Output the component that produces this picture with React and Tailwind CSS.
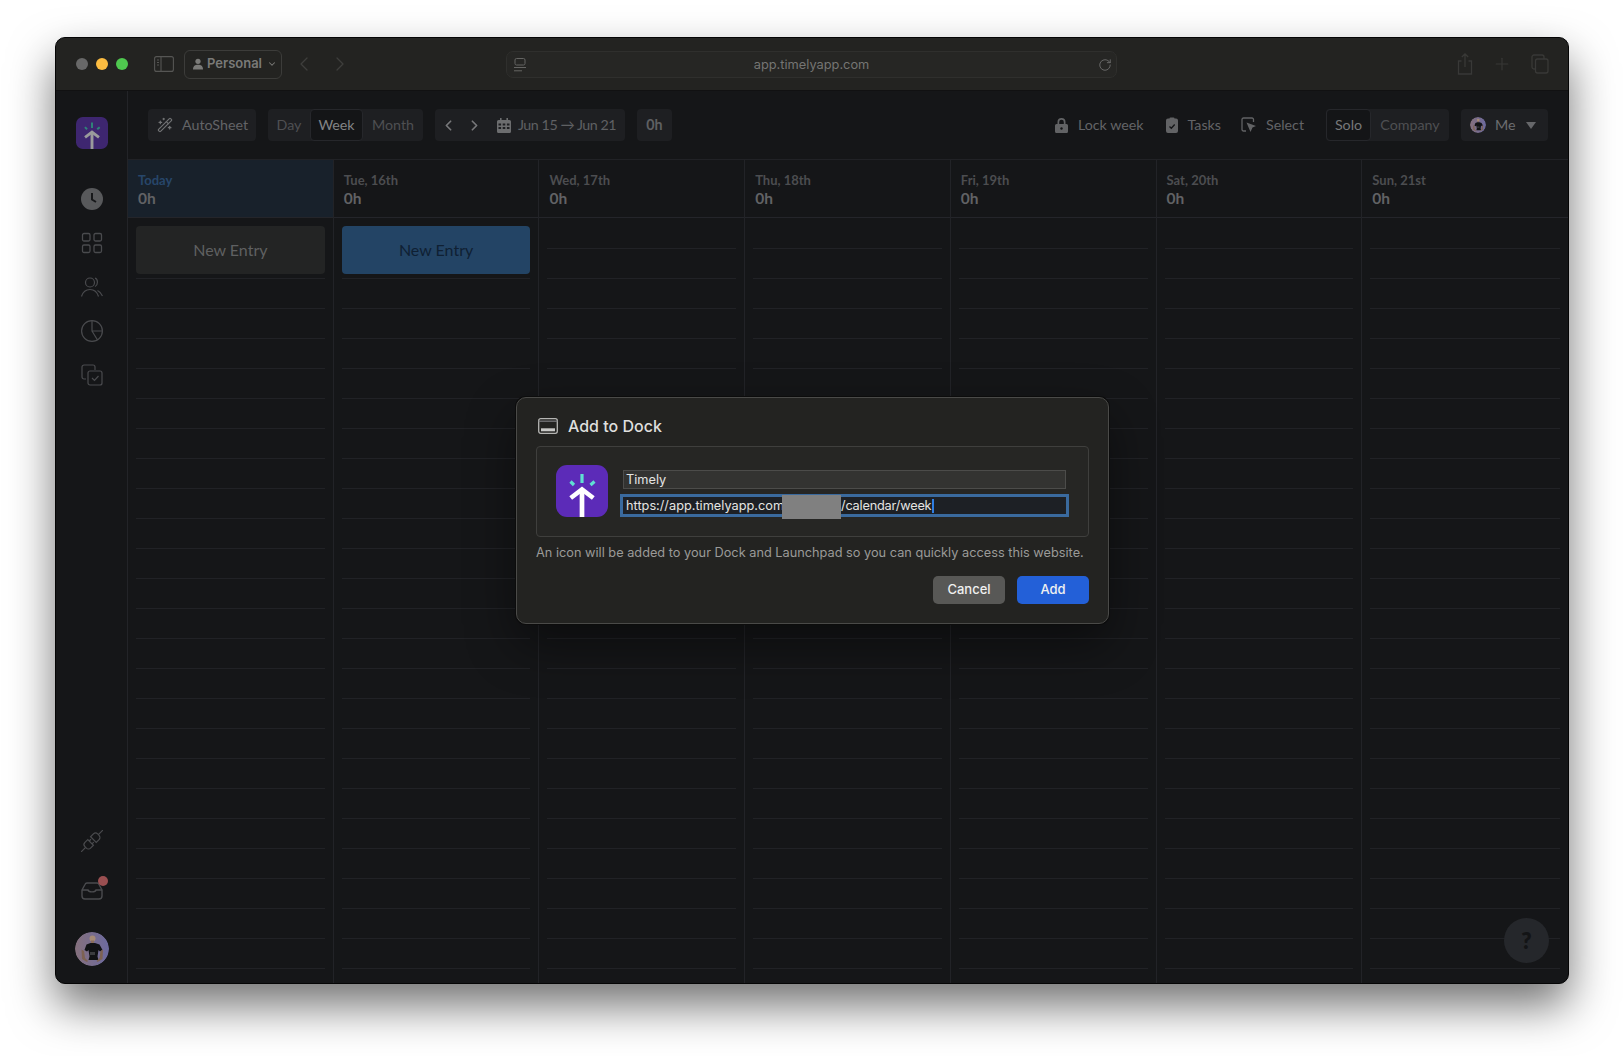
import { ChevronLeft, ChevronRight, ChevronDown, Plus, RotateCw, WandSparkles } from "lucide-react";

const days = ["Today", "Tue, 16th", "Wed, 17th", "Thu, 18th", "Fri, 19th", "Sat, 20th", "Sun, 21st"];
const rows = Array.from({ length: 25 }, (_, i) => i);

function TimelyMark({ bg, arrow, ray, className }) {
  return (
    <svg viewBox="0 0 52 52" className={className}>
      <rect width="52" height="52" rx="11" fill={bg} />
      <path d="M26 25V52" stroke={arrow} strokeWidth="4.7" />
      <path d="M14.7 33L26 24.5L37.3 33" stroke={arrow} strokeWidth="4.6" fill="none" />
      <path d="M26 9V18M14.5 16.5L18 20M38.5 16.5L34.5 20" stroke={ray} strokeWidth="3.2" fill="none" />
    </svg>
  );
}

function Avatar({ className, id }) {
  return (
    <svg viewBox="0 0 34 34" className={className}>
      <defs>
        <linearGradient id={id} x1="0" x2="1" y1="0" y2="0">
          <stop offset="0" stopColor="#85707c" />
          <stop offset="1" stopColor="#6c6a9f" />
        </linearGradient>
      </defs>
      <circle cx="17" cy="17" r="17" fill={`url(#${id})`} />
      <circle cx="17.5" cy="6.5" r="3" fill="#a58a76" />
      <path d="M16 8.5h3v3h-3z" fill="#8a6e5c" />
      <path d="M11.5 12.5l4-1.5h4.5l4.5 1.5 3 5.5-2.5 1.5-1.5-1.5-1 6.5 1 3.5h-10l1-3.5-1-6.5-1.5 1.5-2.5-1.5z" fill="#111214" />
      <path d="M6.5 17.5l2.5 1.5 1 7 3 3-1 1-5-3zM28 17.500l-2.5 1.5-1 7-3 3 1 1 5-3z" fill="#7d6252" />
      <path d="M15 20h5v3h-5z" fill="#3b3c3e" />
    </svg>
  );
}

function ToolAction({ icon, label, className }) {
  return (
    <div className={`flex items-center gap-[10px] ${className || ""}`}>
      {icon}
      <span>{label}</span>
    </div>
  );
}

function DayColumn({ day, index }) {
  const isToday = index === 0;
  return (
    <div className="relative border-r border-[#222327] last:border-r-0">
      <div className={`h-[58px] border-b border-[#24252a] pl-[10px] pt-[11px] ${isToday ? "bg-[#18212b]" : ""}`}>
        <div className={`text-[13px] leading-[18px] font-bold ${isToday ? "text-[#27466a]" : "text-[#4c4d50]"}`}>{day}</div>
        <div className="-mt-[1px] text-[15.5px] leading-[20px] font-bold text-[#616265]">0h</div>
      </div>
      <div className="px-2 pt-[1px]">
        {rows.map((r) => (
          <div key={r} className="h-[30px] border-b border-[#212226]"></div>
        ))}
      </div>
      {index < 2 && (
        <div
          className={`absolute left-2 right-2 top-[66px] flex h-[48px] items-center justify-center rounded-[4px] text-[16px] ${
            isToday ? "bg-[#232424] text-[#5f6061]" : "bg-[#234465] text-[#0f2033]"
          }`}
        >
          New Entry
        </div>
      )}
    </div>
  );
}

function Sidebar() {
  return (
    <div className="relative flex w-[72px] shrink-0 flex-col items-center border-r border-[#232428] pt-[26px] pb-[17px]">
      <TimelyMark bg="#3e2670" arrow="#9a9a9c" ray="#2f8278" className="h-8 w-8 rounded-[5px]" />
      <svg viewBox="0 0 22 22" className="mt-[39px] h-[22px] w-[22px]">
        <circle cx="11" cy="11" r="11" fill="#58595b" />
        <path d="M11 5v6.5l4 2.5" stroke="#17181a" strokeWidth="2" fill="none" />
      </svg>
      <svg viewBox="0 0 22 22" className="mt-[22px] h-[22px] w-[22px]" fill="none" stroke="#4a4b4e" strokeWidth="1.3">
        <rect x="1.5" y="1.5" width="7.5" height="7.5" rx="1.5" />
        <rect x="13" y="1.5" width="7.5" height="7.5" rx="1.5" />
        <rect x="1.5" y="13" width="7.5" height="7.5" rx="1.5" />
        <rect x="13" y="13" width="7.5" height="7.5" rx="1.5" />
      </svg>
      <svg viewBox="0 0 22 22" className="mt-[22px] h-[22px] w-[22px]" fill="none" stroke="#4a4b4e" strokeWidth="1.2">
        <circle cx="9" cy="6.5" r="4.5" />
        <path d="M0.5 20.5C2 15.5 5 13.5 9 13.5S16 15.5 17.5 20.5" />
        <path d="M14 2.2C17 3 17.5 8.5 14 10.5M16.5 14.5C18.8 15.5 20.3 17.5 21.5 20" />
      </svg>
      <svg viewBox="0 0 22 22" className="mt-[22px] h-[22px] w-[22px]" fill="none" stroke="#4a4b4e" strokeWidth="1.2">
        <circle cx="11" cy="11" r="10.4" />
        <path d="M11 .6V11H21.4M11 11L16.5 20" />
      </svg>
      <svg viewBox="0 0 22 22" className="mt-[22px] h-[22px] w-[22px]" fill="none" stroke="#4a4b4e" strokeWidth="1.2">
        <path d="M5 15H3a2 2 0 0 1-2-2V3a2 2 0 0 1 2-2h9a2 2 0 0 1 2 2v3" />
        <rect x="7" y="7" width="14" height="14" rx="2" />
        <path d="M11 14l2.5 2.5L17.5 12" />
      </svg>

      <div className="mt-auto flex flex-col items-center">
        <svg viewBox="-11 -11 22 22" className="h-[22px] w-[22px]" fill="none" stroke="#4a4b4e" strokeWidth="1.2">
          <g transform="rotate(-45)">
            <path d="M-15.5 0H-9M9 0H15.5" />
            <path d="M-2 -4H-6A3 3 0 0 0 -9 -1V1A3 3 0 0 0 -6 4H-2Z" />
            <path d="M2 -4H6A3 3 0 0 1 9 -1V1A3 3 0 0 1 6 4H2Z" />
            <path d="M-2 -2H.5M-2 2H.5" />
          </g>
        </svg>
        <div className="relative mt-[30px]">
          <svg viewBox="0 0 22 18" className="h-[18px] w-[22px]" fill="none" stroke="#4a4b4e" strokeWidth="1.4">
            <path d="M1 8L4 2.5A2.5 2.5 0 0 1 6 1H16A2.5 2.5 0 0 1 18 2.5L21 8V14A3 3 0 0 1 18 17H4A3 3 0 0 1 1 14Z" />
            <path d="M1 8H7C7.5 10.5 14.5 10.5 15 8H21" />
          </svg>
          <div className="absolute -top-[6px] -right-[5px] h-[10px] w-[10px] rounded-full bg-[#9a4f51]"></div>
        </div>
        <Avatar id="avatarLarge" className="mt-[32px] h-[34px] w-[34px] rounded-full" />
      </div>
    </div>
  );
}

function Toolbar() {
  return (
    <div className="flex h-[69px] shrink-0 items-center border-b border-[#212226] pl-5 pr-5 text-[14.25px] whitespace-nowrap text-[#636467]">
      <div className="flex h-8 w-[108px] items-center gap-[9px] rounded-[4px] bg-[#1e1f22] pl-[9px]">
        <WandSparkles size={16} strokeWidth={1.8} className="text-[#707173]" />
        <span>AutoSheet</span>
      </div>
      <div className="ml-3 flex h-8 w-[155px] items-center rounded-[4px] bg-[#1e1f22] text-[#4e4f52]">
        <div className="w-[42px] text-center">Day</div>
        <div className="flex h-8 w-[53px] items-center justify-center rounded-[4px] border border-[#26272b] bg-[#141517] text-[#838486]">Week</div>
        <div className="flex-1 text-center">Month</div>
      </div>
      <div className="ml-3 flex h-8 w-[190px] items-center rounded-[4px] bg-[#1e1f22]">
        <ChevronLeft size={17} strokeWidth={2.4} className="ml-[5px] text-[#77787a]" />
        <ChevronRight size={17} strokeWidth={2.4} className="ml-[9px] text-[#77787a]" />
        <svg viewBox="0 0 14 15" className="ml-[14px] h-[15px] w-[14px]" fill="#6c6d6f">
          <path d="M3 0h1.6v2h4.8V0H11v2h1.5A1.5 1.5 0 0 1 14 3.5v10a1.5 1.5 0 0 1-1.5 1.5h-11A1.5 1.5 0 0 1 0 13.5v-10A1.5 1.5 0 0 1 1.5 2H3ZM1.5 5.5v2h2.6v-2Zm4.2 0v2h2.6v-2Zm4.2 0v2h2.6v-2ZM1.5 9v2h2.6V9Zm4.2 0v2h2.6V9Zm4.2 0v2h2.6V9Z" />
        </svg>
        <span className="ml-[7px] tracking-[-0.45px] text-[#5f6063]">Jun 15 → Jun 21</span>
      </div>
      <div className="ml-3 flex h-8 w-[35px] items-center justify-center rounded-[4px] bg-[#1e1f22] font-bold text-[#5f6063]">0h</div>

      <div className="ml-auto flex items-center">
        <ToolAction
          label="Lock week"
          icon={
            <svg viewBox="0 0 13 15" className="h-[15px] w-[13px]" fill="#626365">
              <path d="M2.5 6V4a4 4 0 0 1 8 0v2h1A1.5 1.5 0 0 1 13 7.5v6a1.5 1.5 0 0 1-1.5 1.5h-10A1.5 1.5 0 0 1 0 13.5v-6A1.5 1.5 0 0 1 1.5 6ZM4.2 6h4.6V4a2.3 2.3 0 0 0-4.6 0Z" />
              <circle cx="6.5" cy="10.5" r="1.2" fill="#141517" />
            </svg>
          }
        />
        <ToolAction
          label="Tasks"
          className="ml-[22px]"
          icon={
            <svg viewBox="0 0 12 16" className="h-4 w-3" fill="#626365">
              <path d="M3.5 1.5A1 1 0 0 1 4.5.5h3a1 1 0 0 1 1 1H10A2 2 0 0 1 12 3.5V14a2 2 0 0 1-2 2H2A2 2 0 0 1 0 14V3.5a2 2 0 0 1 2-2Z" />
              <path d="M3.5 9.5L5.3 11.3L8.7 7.5" stroke="#141517" strokeWidth="1.3" fill="none" />
            </svg>
          }
        />
        <ToolAction
          label="Select"
          className="ml-[20px]"
          icon={
            <svg viewBox="0 0 15 16" className="h-4 w-[15px]" fill="none">
              <path d="M5 14H2.5A1.5 1.5 0 0 1 1 12.5V2.5A1.5 1.5 0 0 1 2.5 1H11A1.5 1.5 0 0 1 12.5 2.5V5" stroke="#626365" strokeWidth="1.3" />
              <path d="M5.5 5.5L15 9L11.5 10.5L9.5 15Z" fill="#626365" />
            </svg>
          }
        />
        <div className="ml-[22px] flex h-8 w-[123px] items-center rounded-[4px] bg-[#1e1f22] text-[#4e4f52]">
          <div className="flex h-8 w-[45px] items-center justify-center rounded-[4px] border border-[#26272b] bg-[#141517] text-[#77787a]">Solo</div>
          <div className="flex-1 text-center">Company</div>
        </div>
      </div>
      <div className="ml-3 flex h-8 w-[87px] items-center rounded-[4px] bg-[#1e1f22] pl-[9px] text-[#6c6d70]">
        <Avatar id="avatarSmall" className="h-4 w-4 rounded-full" />
        <span className="ml-[9px]">Me</span>
        <svg viewBox="0 0 10 7" className="ml-[10px] h-[7px] w-[10px]" fill="#66676a">
          <path d="M0 0h10L5 7Z" />
        </svg>
      </div>
    </div>
  );
}

function TitleBar() {
  return (
    <div className="flex h-[53px] shrink-0 items-center border-b border-[#111112] bg-[#232321] font-['Inter']">
      <div className="ml-[20px] h-3 w-3 rounded-full bg-[#686868]"></div>
      <div className="ml-2 h-3 w-3 rounded-full bg-[#fcbc41]"></div>
      <div className="ml-2 h-3 w-3 rounded-full bg-[#4fc84f]"></div>
      <svg viewBox="0 0 20 16" className="ml-[26px] h-4 w-5" fill="none" stroke="#565654" strokeWidth="1.1">
        <rect x=".6" y=".6" width="18.8" height="14.8" rx="2" />
        <path d="M7 .6V15.4M3 4h2M3 6.5h2M3 9h2" />
      </svg>
      <div className="ml-[10px] flex h-[29px] w-[98px] items-center rounded-[6px] border border-[#3c3c3a] pl-2 text-[13px] font-semibold text-[#7a7a78]">
        <svg viewBox="0 0 10 11" className="h-[12px] w-[10px]" fill="#7a7a78">
          <circle cx="5" cy="2.8" r="2.6" />
          <path d="M0 11C0 7.5 2 6.2 5 6.2S10 7.5 10 11Z" />
        </svg>
        <span className="ml-[4px]">Personal</span>
        <ChevronDown size={10} strokeWidth={2.5} className="ml-[5px]" />
      </div>
      <ChevronLeft size={24} strokeWidth={1.3} className="ml-[10px] text-[#3e3e3c]" />
      <ChevronRight size={24} strokeWidth={1.3} className="ml-[12px] text-[#3e3e3c]" />
      <div className="relative ml-[154px] flex h-[27px] w-[611px] items-center justify-center rounded-[7px] border border-[#2f2f2d] bg-[#262624] text-[12.8px] text-[#757573]">
        <svg viewBox="0 0 12 14" className="absolute left-[7px] top-[6px] h-[14px] w-3" fill="none" stroke="#656563" strokeWidth="1">
          <rect x="1" y=".5" width="10" height="6.5" rx="1.5" />
          <path d="M0 9.5h12M0 12.8h8" />
        </svg>
        <span className="mt-[1px]">app.timelyapp.com</span>
        <RotateCw size={14} strokeWidth={1.5} className="absolute right-[4px] top-[6px] text-[#707070]" />
      </div>
      <div className="ml-auto flex items-center pr-[19px] text-[#393937]">
        <svg viewBox="0 0 16 22" className="h-[22px] w-4" fill="none" stroke="currentColor" strokeWidth="1.3">
          <path d="M4.5 8H1.5v13h13V8h-3M8 14V1M4.8 4L8 1l3.2 3" />
        </svg>
        <Plus size={20} strokeWidth={1.3} className="ml-[19px]" />
        <svg viewBox="0 0 18 20" className="ml-[19px] h-5 w-[18px]" fill="none" stroke="currentColor" strokeWidth="1.3">
          <rect x="1" y="1" width="12" height="14" rx="2" />
          <rect x="4.5" y="5" width="12.5" height="14" rx="2" fill="#232321" />
        </svg>
      </div>
    </div>
  );
}

function AddToDockDialog() {
  return (
    <div className="absolute left-[460px] top-[359px] h-[227px] w-[593px] rounded-[10px] border border-[#4a4a48] bg-[#232321] pl-[19px] pr-[19px] pt-[20px] font-['Inter'] shadow-[0_0_0_1px_#0c0c0c,0_20px_50px_rgba(0,0,0,0.45)]">
      <div className="ml-[2px] flex h-4 items-center">
        <svg viewBox="0 0 20 16" className="h-4 w-5" fill="none">
          <rect x=".7" y=".7" width="18.6" height="14.6" rx="2" stroke="#b5b5b3" strokeWidth="1.3" />
          <path d="M.7 3.2h18.6" stroke="#77777a" strokeWidth="1.3" />
          <rect x="3" y="10.3" width="14" height="3" fill="#c8c8c6" />
        </svg>
        <span className="ml-[10px] text-[16px] font-medium text-[#dfdfdd]">Add to Dock</span>
      </div>
      <div className="mt-[12px] flex h-[91px] w-[553px] items-start rounded-[4px] border border-[#3f3f3d] bg-[#262624] pl-[19px] pt-[18px]">
        <TimelyMark bg="#5c2bb8" arrow="#ffffff" ray="#5fe0d2" className="h-[52px] w-[52px] shrink-0" />
        <div className="ml-[15px] flex flex-col text-[12.75px] text-[#e4e4e2]">
          <div className="mt-[5px] flex h-[19px] w-[443px] items-center border border-[#4c4c4a] bg-[#333331] pl-[2px]">Timely</div>
          <div className="relative mt-[8px] flex h-[17px] w-[443px] items-center bg-[#1d2025] pl-[3px] outline-[3px] outline-[#3a6a9e]">
            <span className="w-[156px] shrink-0 whitespace-nowrap">https://app.timelyapp.com</span>
            <span className="absolute left-[159px] -top-[2px] h-6 w-[59px] bg-[#808080]"></span>
            <span className="ml-[59px] tracking-[-0.2px]">/calendar/week</span>
            <span className="ml-[1px] h-[14px] w-[2px] bg-[#2f7de1]"></span>
          </div>
        </div>
      </div>
      <p className="mt-[8px] whitespace-nowrap text-[12.75px] leading-4 text-[#9a9a98]">
        An icon will be added to your Dock and Launchpad so you can quickly access this website.
      </p>
      <div className="mt-[15px] flex justify-end gap-3 text-[13px] font-medium text-[#f0f0f0]">
        <div className="flex h-7 w-[72px] items-center justify-center rounded-[5px] bg-[#585856]">Cancel</div>
        <div className="flex h-7 w-[72px] items-center justify-center rounded-[5px] bg-[#2360d8]">Add</div>
      </div>
    </div>
  );
}

export default function App() {
  return (
    <div className="h-[1056px] w-[1624px] overflow-hidden bg-white pl-[55px] pt-[37px] font-['Lato']">
      <div className="relative flex h-[947px] w-[1514px] flex-col overflow-hidden rounded-[10px] border border-[#050505] bg-[#151618] shadow-[0_22px_45px_rgba(0,0,0,0.55)]">
        <TitleBar />
        <div className="flex min-h-0 flex-1">
          <Sidebar />
          <div className="flex min-w-0 flex-1 flex-col">
            <Toolbar />
            <div className="grid flex-1 grid-cols-7 overflow-hidden">
              {days.map((day, i) => (
                <DayColumn key={day} day={day} index={i} />
              ))}
            </div>
          </div>
        </div>
        <div className="absolute bottom-[20px] right-[19px] flex h-[45px] w-[45px] items-center justify-center rounded-full bg-[#25272b] text-[22px] font-extrabold text-[#131416]">?</div>
        <AddToDockDialog />
      </div>
    </div>
  );
}
